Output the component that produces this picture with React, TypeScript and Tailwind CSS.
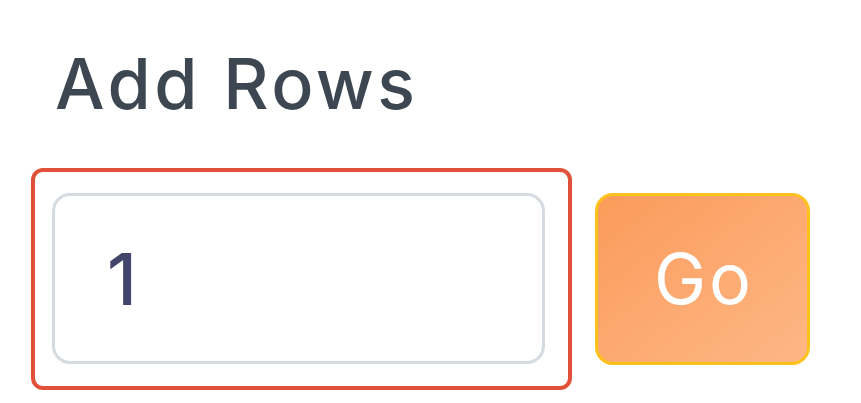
import React from "react";

export default function App() {
  return (
    <div className="w-[861px] h-[403px] bg-white overflow-hidden" style={{ fontFamily: "Inter, 'Open Sans', sans-serif" }}>
      <div className="pl-[55px] pt-[45px]">
        <h2 className="text-[70px] leading-[78px] font-medium text-[#3d4752] tracking-[3.5px]">Add Rows</h2>
      </div>
      <div className="flex items-center pl-[31px] mt-[45px]">
        <div className="w-[541px] h-[222px] border-[4px] border-[#e2503a] rounded-[12px] pl-[17px] pr-[23px] pt-[21px] pb-[22px]">
          <div className="w-full h-full border-[3px] border-[#d6dbe1] rounded-[18px] bg-white flex items-center pl-[52px]">
            <span className="text-[72px] leading-none text-[#41456a] font-medium">1</span>
          </div>
        </div>
        <button className="ml-[23px] w-[215px] h-[172px] rounded-[18px] border-[3px] border-[#ffc21c] bg-gradient-to-br from-[#fb9b5a] to-[#fdb785] flex items-center justify-center text-white text-[70px] font-normal leading-none tracking-[3px] pl-[3px]">
          Go
        </button>
      </div>
    </div>
  );
}
